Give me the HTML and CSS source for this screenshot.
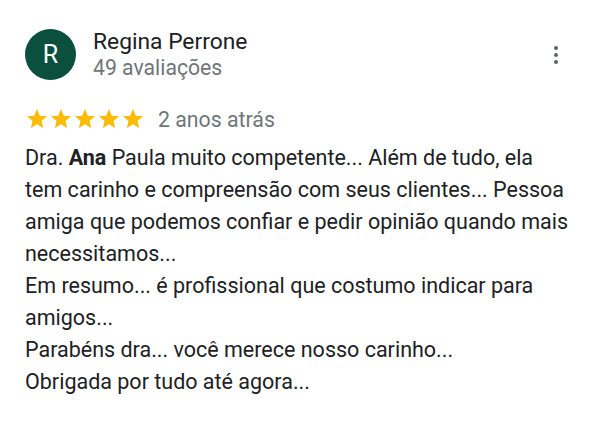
FILE: index.html
```html
<!DOCTYPE html>
<html lang="pt-BR">
<head>
<meta charset="utf-8">
<link rel="stylesheet" href="styles.css">
</head>
<body>
<div class="review">
  <div class="header">
    <div class="avatar">R</div>
    <div class="who">
      <div class="name">Regina Perrone</div>
      <div class="count">49 avaliações</div>
    </div>
    <div class="menu"><span></span><span></span><span></span></div>
  </div>
  <div class="meta">
    <div class="stars">
      <svg viewBox="0 0 24 24"><path d="M12 17.27L18.18 21l-1.64-7.03L22 9.24l-7.19-.61L12 2 9.19 8.63 2 9.24l5.46 4.73L5.82 21z"/></svg>
      <svg viewBox="0 0 24 24"><path d="M12 17.27L18.18 21l-1.64-7.03L22 9.24l-7.19-.61L12 2 9.19 8.63 2 9.24l5.46 4.73L5.82 21z"/></svg>
      <svg viewBox="0 0 24 24"><path d="M12 17.27L18.18 21l-1.64-7.03L22 9.24l-7.19-.61L12 2 9.19 8.63 2 9.24l5.46 4.73L5.82 21z"/></svg>
      <svg viewBox="0 0 24 24"><path d="M12 17.27L18.18 21l-1.64-7.03L22 9.24l-7.19-.61L12 2 9.19 8.63 2 9.24l5.46 4.73L5.82 21z"/></svg>
      <svg viewBox="0 0 24 24"><path d="M12 17.27L18.18 21l-1.64-7.03L22 9.24l-7.19-.61L12 2 9.19 8.63 2 9.24l5.46 4.73L5.82 21z"/></svg>
    </div>
    <span class="date">2 anos atrás</span>
  </div>
  <p class="text">Dra. <b>Ana</b> Paula muito competente... Além de tudo, ela<br>tem carinho e compreensão com seus clientes... Pessoa amiga que podemos confiar e pedir opinião quando mais necessitamos...<br>Em resumo... é profissional que costumo indicar para amigos...<br>Parabéns dra... você merece nosso carinho...<br>Obrigada por tudo até agora...</p>
</div>
</body>
</html>
```
FILE: styles.css
```css
html, body {
  margin: 0;
  padding: 0;
  background: #fff;
}
body {
  font-family: Roboto, "Liberation Sans", Arial, sans-serif;
  color: #202124;
}
.review {
  padding: 29px 25px 0 25px;
  width: 550px;
}
.header {
  display: flex;
  align-items: flex-start;
}
.avatar {
  width: 51px;
  height: 51px;
  border-radius: 50%;
  background: #0b4f3f;
  color: #fff;
  font-size: 25px;
  display: flex;
  align-items: center;
  justify-content: center;
  flex: none;
}
.who {
  margin-left: 17px;
  flex: 1;
  margin-top: -1px;
}
.name {
  font-size: 22.8px;
  line-height: 27px;
  color: #202124;
}
.count {
  font-size: 21.2px;
  line-height: 25px;
  color: #70757a;
}
.menu {
  display: flex;
  flex-direction: column;
  gap: 3px;
  margin-top: 17px;
  margin-right: 17px;
}
.menu span {
  width: 4px;
  height: 4px;
  border-radius: 50%;
  background: #5f6368;
}
.meta {
  display: flex;
  align-items: center;
  margin-top: 23px;
  height: 32px;
}
.stars {
  display: flex;
}
.stars svg {
  width: 24px;
  height: 24px;
  fill: #fbbc04;
}
.date {
  margin-left: 13px;
  font-size: 21.3px;
  color: #70757a;
}
.text {
  margin: 7px 0 0 0;
  font-size: 21.5px;
  line-height: 32px;
  color: #202124;
}
.text b {
  font-weight: 700;
}
```
